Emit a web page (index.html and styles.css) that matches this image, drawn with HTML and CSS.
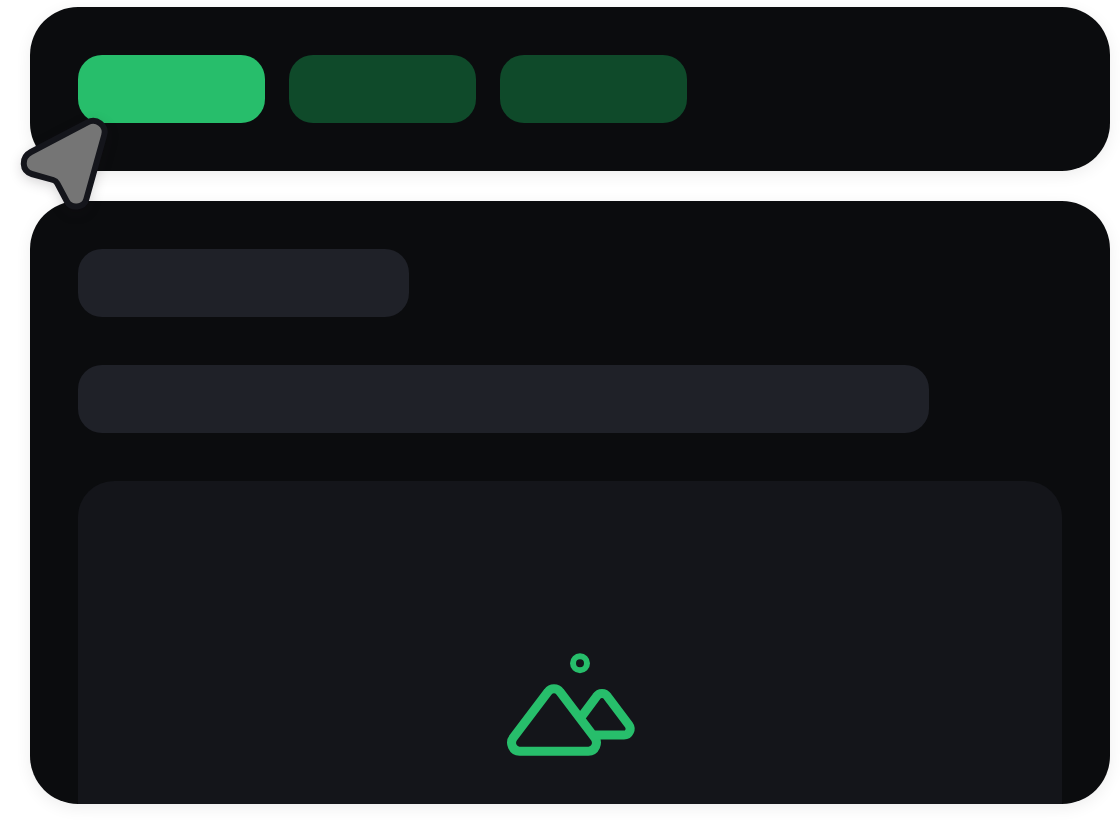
FILE: index.html
```html
<!DOCTYPE html>
<html lang="en">
<head>
<meta charset="utf-8">
<meta name="viewport" content="width=device-width, initial-scale=1">
<title>Tabs</title>
<link rel="stylesheet" href="styles.css">
</head>
<body>
<main class="page">
  <nav class="card tabs" aria-label="Sections">
    <button class="tab tab-active" type="button" aria-label="First tab"></button>
    <button class="tab" type="button" aria-label="Second tab"></button>
    <button class="tab" type="button" aria-label="Third tab"></button>
    <svg class="cursor" viewBox="0 0 120 120" aria-hidden="true">
      <path d="M31 52L87.5 22.3C96.5 17.5 107 25.5 104.2 35.3L86.3 99.2C83.8 108 71.2 109.2 66.8 101.2L57.3 83.4C56.4 81.6 55.2 80.6 53.2 80L31.8 74C21.6 71 20.8 57.4 31 52Z"/>
    </svg>
  </nav>
  <section class="card panel">
    <div class="bar bar-title"></div>
    <div class="bar bar-text"></div>
    <div class="media">
      <svg class="mountains" viewBox="0 0 160 130" aria-hidden="true">
        <circle cx="90" cy="23.2" r="7" stroke-width="6"/>
        <path d="M58 51.8L23.4 97.5C19.2 103 22.8 111.2 29.5 111.2H98.5C105.2 111.2 108.8 103 104.6 97.5L70 51.8C67 47.6 61 47.6 58 51.8Z"/>
        <path d="M91.8 76.2L106.4 56.6C109.2 52.4 114.8 52.4 117.6 56.6L138.8 84.8C141.8 89 139.3 95 134 95H105"/>
      </svg>
    </div>
  </section>
</main>
</body>
</html>
```
FILE: styles.css
```css
* {
  box-sizing: border-box;
}

body {
  margin: 0;
  background: #fff;
  font-family: Inter, sans-serif;
}

.page {
  display: flex;
  flex-direction: column;
  gap: 30px;
  padding: 7px 10px 18px 30px;
}

.card {
  padding: 48px;
  border-radius: 48px;
  background: #0b0c0e;
  box-shadow: 0 4px 16px rgba(20, 10, 20, 0.07);
}

.tabs {
  position: relative;
  display: flex;
  gap: 24px;
}

.tab {
  width: 19%;
  height: 68px;
  padding: 0;
  border: 0;
  border-radius: 24px;
  background: #0f4a2a;
}

.tab-active {
  background: #27be6b;
}

.cursor {
  position: absolute;
  z-index: 1;
  top: 93px;
  left: -30px;
  width: 120px;
  height: 120px;
  overflow: visible;
  fill: #757575;
  stroke: #14151b;
  stroke-width: 6;
  filter: drop-shadow(0 4px 6px rgba(20, 10, 20, 0.16));
}

.panel {
  display: flex;
  flex-direction: column;
  gap: 48px;
  padding-bottom: 0;
  overflow: hidden;
}

.bar {
  height: 68px;
  border-radius: 24px;
  background: #1f2128;
}

.bar-title {
  width: 33.6%;
}

.bar-text {
  width: 86.5%;
}

.media {
  display: flex;
  justify-content: center;
  padding: 159px 0 34px;
  border-radius: 36px 36px 0 0;
  background: #14151a;
}

.mountains {
  width: 160px;
  height: 130px;
  fill: none;
  stroke: #27be6b;
  stroke-width: 9;
}
```
